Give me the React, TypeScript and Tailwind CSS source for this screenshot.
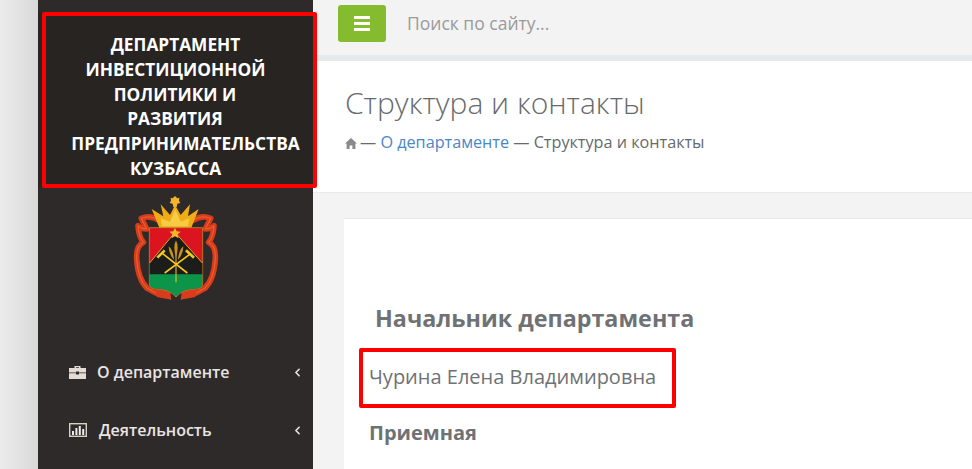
import { ChevronLeft } from "lucide-react";

const FONT = { fontFamily: '"Open Sans", "Noto Sans", sans-serif' };

function RibbonSide() {
  return (
    <g>
      <path d="M120 108 Q92 88 64 100 L80 132 Q62 132 54 122 Q56 155 70 172 Q48 182 50 222 Q54 284 82 310 L108 324 L150 326" fill="none" stroke="#d83c1c" strokeWidth="17" strokeLinejoin="round" />
      <path d="M120 108 Q92 88 64 100 L80 132 Q62 132 54 122 Q56 155 70 172 Q48 182 50 222 Q54 284 82 310 L108 324 L150 326" fill="none" stroke="#f0642a" strokeWidth="3" strokeLinejoin="round" />
      <path d="M106 312 L150 316 L154 344 L110 336 Z" fill="#d83c1c" />
    </g>
  );
}

function Emblem() {
  return (
    <svg width="100" height="118" viewBox="0 6 300 354" className="block">
      <RibbonSide />
      <g transform="translate(336 0) scale(-1 1)">
        <RibbonSide />
      </g>
      {/* crown */}
      <path d="M165 33 L172 40 L178 38 L177 47 L181 54 L172 56 L170 66 L160 66 L158 56 L149 54 L153 47 L152 38 L158 40 Z" fill="#f2b52a" />
      <path d="M95 72 L130 94 L122 58 L150 90 L165 60 L182 90 L210 58 L204 94 L236 72 L214 128 L118 128 Z" fill="#f0ac14" />
      <path d="M122 100 L150 110 L166 72 L182 110 L208 100 L204 124 L126 124 Z" fill="#f8cb45" />
      {/* shield */}
      <path d="M88 128 L248 128 L248 296 Q248 312 226 312 Q190 312 168 336 Q146 312 110 312 Q88 312 88 296 Z" fill="#dc1420" stroke="#c9a02a" strokeWidth="2" />
      <path d="M89 234 L165 142 L247 234 L247 270 L89 270 Z" fill="#1c1c1a" />
      <path d="M89 268 L247 268 L247 296 Q247 311 226 311 Q190 311 168 334 Q146 311 110 311 Q89 311 89 296 Z" fill="#0c9448" />
      <path d="M89 234 L165 142 L247 234" fill="none" stroke="#f0c020" strokeWidth="2.5" />
      <path d="M165 128 L170 139 L182 140 L173 148 L176 160 L165 154 L154 160 L157 148 L148 140 L160 139 Z" fill="#f2b52a" />
      {/* hammers and wheat */}
      <path d="M134 264 L212 206 M202 264 L128 206" stroke="#f4c61e" strokeWidth="5" fill="none" />
      <path d="M112 218 L134 196 M222 218 L198 196" stroke="#f4c61e" strokeWidth="8" fill="none" />
      <path d="M168 190 L168 292" stroke="#f4c61e" strokeWidth="3" fill="none" />
      <path d="M168 166 Q178 186 168 216 Q158 186 168 166 Z" fill="#c9921c" />
      <path d="M146 184 Q160 196 162 224 Q146 208 146 184 Z" fill="#c9921c" />
      <path d="M190 184 Q176 196 174 224 Q190 208 190 184 Z" fill="#c9921c" />
    </svg>
  );
}

function BriefcaseIcon() {
  return (
    <svg width="17" height="14" viewBox="0 0 17 14" className="-mr-[1px] shrink-0">
      <path d="M5.5 3V1h6V3H10V2.3H7V3Z M0 3h17v4.4H10V6.5H7v.9H0Z M0 8.2h7V9.5h3V8.2h7V14H0Z" fill="#e4dcd4" />
    </svg>
  );
}

function ChartIcon() {
  return (
    <svg width="18" height="14" viewBox="0 0 18 14" className="shrink-0">
      <rect x="0.7" y="0.7" width="16.6" height="12.6" fill="none" stroke="#d8cfc6" strokeWidth="1.4" />
      <path d="M3 8h2v4H3Z M6.4 5h2v7h-2Z M9.8 3h2v9h-2Z M13.2 6h2v6h-2Z" fill="#f0ece8" />
    </svg>
  );
}

function NavItem({ icon, label }: { icon: React.ReactNode; label: string }) {
  return (
    <div className="flex h-[58px] items-center pl-[31px] pr-[9px] text-[#e9e5e2]">
      {icon}
      <span className="ml-[12px] flex-1 text-[16px] font-semibold">{label}</span>
      <ChevronLeft size={13} strokeWidth={3} />
    </div>
  );
}

export default function App() {
  return (
    <div className="flex h-[469px] w-[972px] overflow-hidden bg-[#f3f3f3] relative" style={FONT}>
      <div className="w-[38px] shrink-0 bg-gradient-to-r from-[#ececec] to-[#d9d9d9]" />

      <aside className="w-[275px] shrink-0 bg-[#2f2a2a]">
        <div className="mt-[12px] h-[175px] bg-[#272422] pt-[21px] text-center text-[17.3px] font-bold leading-[24.8px] text-white">
          <div>ДЕПАРТАМЕНТ</div>
          <div>ИНВЕСТИЦИОННОЙ</div>
          <div className="pr-[1px]">ПОЛИТИКИ И</div>
          <div className="pr-[1px]">РАЗВИТИЯ</div>
          <div className="whitespace-nowrap pl-[20px]">ПРЕДПРИНИМАТЕЛЬСТВА</div>
          <div>КУЗБАССА</div>
        </div>
        <div className="flex justify-center pr-[11px]">
          <Emblem />
        </div>
        <div className="mt-[38px]">
          <NavItem icon={<BriefcaseIcon />} label="О департаменте" />
          <NavItem icon={<ChartIcon />} label="Деятельность" />
        </div>
      </aside>

      <main className="flex-1 min-w-0">
        <header className="flex h-[55px] items-center pl-[25px] pb-[9px]">
          <button className="flex h-[37px] w-[48px] items-center justify-center rounded-[3px] bg-[#85bb2e]">
            <span className="flex w-[16px] flex-col gap-[3px]">
              <span className="h-[3px] bg-white" />
              <span className="h-[3px] bg-white" />
              <span className="h-[3px] bg-white" />
            </span>
          </button>
          <span className="ml-[21px] text-[17.5px] text-[#9a9a9a]">Поиск по сайту...</span>
        </header>
        <div className="h-[6px] bg-[#e7eaec]" />

        <div className="h-[132px] border-b border-[#e7eaec] bg-white pl-[32px] pt-[22px]">
          <h1 className="text-[30px] font-light leading-[40px] text-[#676a6c]">Структура и контакты</h1>
          <div className="mt-[9px] flex items-center text-[16.2px] leading-[20px] text-[#676a6c]">
            <svg width="12" height="11" viewBox="0 0 12 11" className="mr-[3px] mt-[2px]">
              <path d="M6 0 L12 5.6 L10.4 5.6 L10.4 11 L7.4 11 L7.4 7.4 L4.6 7.4 L4.6 11 L1.6 11 L1.6 5.6 L0 5.6 Z" fill="#8a8a8a" />
            </svg>
            <span>—&nbsp;</span>
            <span className="text-[#4a86c8]">О департаменте</span>
            <span>&nbsp;—&nbsp;Структура и контакты</span>
          </div>
        </div>

        <div className="ml-[31px] mt-[25px] h-[260px] border-t border-[#e7eaec] bg-white pt-[84px] text-[#6f7274]">
          <h2 className="ml-[31px] text-[23.3px] font-bold leading-[30px]">Начальник департамента</h2>
          <p className="ml-[25px] mt-[30px] text-[20px] leading-[28px]">Чурина Елена Владимировна</p>
          <h3 className="ml-[25px] mt-[28px] text-[20px] font-bold leading-[28px]">Приемная</h3>
        </div>
      </main>

      {/* red annotation frames */}
      <div className="absolute left-[42px] top-[12px] h-[176px] w-[275px] rounded-[2px] border-[4px] border-[#ff0000]" />
      <div className="absolute left-[359px] top-[348px] h-[60px] w-[317px] rounded-[2px] border-[4px] border-[#ff0000]" />
    </div>
  );
}
